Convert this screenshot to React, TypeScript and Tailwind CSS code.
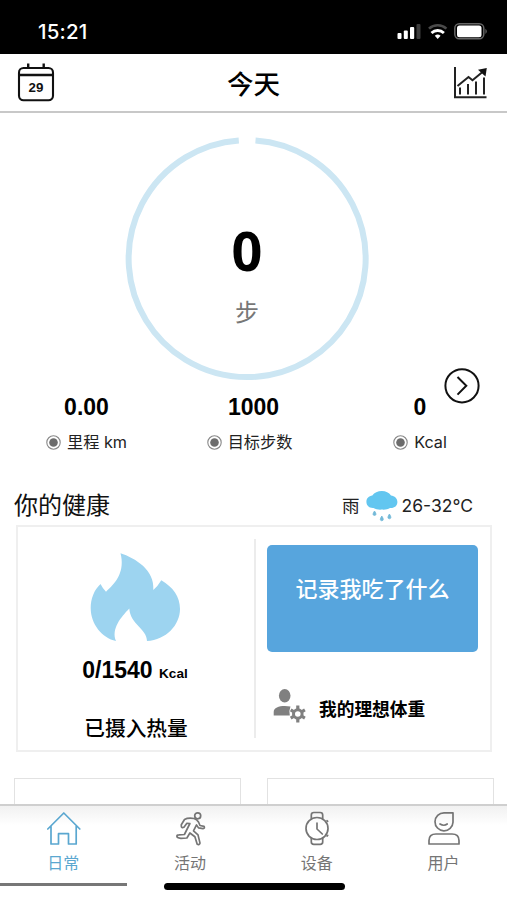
import type { ReactNode } from "react";

const UI = "font-['Inter','Noto_Sans_CJK_SC',sans-serif]";
const NUM = "font-['Liberation_Sans','Noto_Sans_CJK_SC',sans-serif]";

function StatusBar() {
  return (
    <div className="flex h-[54px] shrink-0 items-start justify-between bg-black pl-[38px] pr-[19px] text-white">
      <span className="pt-[20px] text-[20.5px] font-medium leading-[24px] tracking-[0.2px]">15:21</span>
      <svg className="mt-[22px]" width="92" height="20" viewBox="396 22 92 20">
        <g fill="#fff">
          <rect x="397.5" y="33" width="4" height="6" rx="1" />
          <rect x="403.8" y="30.5" width="4" height="8.5" rx="1" />
          <rect x="410" y="27" width="4.2" height="12" rx="1" />
          <rect x="416.5" y="24" width="4" height="15" rx="1" fill="#3c3c3c" />
          <path d="M437.7 39 l-2.9-3.2 a4.2 4.2 0 0 1 5.8 0z" />
          <rect x="457" y="25.6" width="24.5" height="11.6" rx="2.5" />
        </g>
        <path d="M429 28.6a12.8 12.8 0 0 1 17.4 0" fill="none" stroke="#4a4a4a" strokeWidth="2.6" />
        <path d="M431.5 33a9 9 0 0 1 12.4 0" fill="none" stroke="#fff" strokeWidth="2.8" />
        <rect x="454.8" y="23.8" width="29" height="15" rx="4.5" fill="none" stroke="#666" strokeWidth="1.5" />
        <path d="M485.5 28.8q2.4 2.6 0 5.2z" fill="#777" />
      </svg>
    </div>
  );
}

function Header() {
  return (
    <header className="flex h-[59px] shrink-0 items-start justify-between border-b-2 border-[#c8c8c8] pl-[17px] pr-[19px]">
      <svg className="mt-[8px]" width="38" height="42" viewBox="17 62 38 42">
        <g fill="none" stroke="#111" strokeWidth="2.1">
          <rect x="19" y="68" width="34" height="32.3" rx="4.5" />
          <path d="M19 75h34" strokeWidth="2.4" />
          <path d="M28.2 63.5V69M43.7 63.5V69" strokeWidth="2.4" />
        </g>
        <text x="36" y="92" textAnchor="middle" fontSize="13.3" fontWeight="700" fontFamily="Liberation Sans" fill="#111">29</text>
      </svg>
      <h1 className="-ml-[1px] pt-[12px] text-[26.5px] font-medium leading-[36px] text-black">今天</h1>
      <svg className="mt-[10px]" width="35" height="38" viewBox="453 64 35 38">
        <g fill="none" stroke="#222" strokeWidth="2">
          <path d="M455 67v30.3h31.5" />
          <path d="M460 87.5v7M468 84v10.5M476 81.5v13M484 77.5v17" />
          <path d="M457.5 86l11-9 4 3.3 10-8.3" />
        </g>
        <path d="M478 69.8l8.8-1.8-1.3 8.6z" fill="#111" />
      </svg>
    </header>
  );
}

function StepRing() {
  return (
    <div className="ml-[125px] mt-[24px] grid h-[244px] w-[244px] shrink-0">
      <svg className="col-start-1 row-start-1" width="244" height="244" viewBox="125 137 244 244">
        <path d="M255.5 140.4A118.5 118.5 0 1 1 238.8 140.4" fill="none" stroke="#cce6f3" strokeWidth="6" />
      </svg>
      <div className="col-start-1 row-start-1 flex flex-col items-center pt-[83px]">
        <span className="font-['Noto_Sans',sans-serif] text-[54px] font-bold leading-[60px] text-black">0</span>
        <span className="mt-[16px] text-[24px] leading-[34px] text-[#777]">步</span>
      </div>
    </div>
  );
}

function Stat({ value, label, shift }: { value: string; label: string; shift: string }) {
  return (
    <div className="flex flex-col items-center">
      <span className={`${NUM} text-[23px] font-bold leading-[26px] text-black`}>{value}</span>
      <span className={`mt-[10px] flex items-center gap-[6px] text-[16.2px] leading-[24px] text-[#222] ${shift}`}>
        <svg width="15" height="15" viewBox="0 0 15 15">
          <circle cx="7.5" cy="7.5" r="6.7" fill="#fff" stroke="#888" strokeWidth="1.1" />
          <circle cx="7.5" cy="7.5" r="4.3" fill="#6c6c6c" />
        </svg>
        {label}
      </span>
    </div>
  );
}

function Flame() {
  return (
    <svg width="92" height="92" viewBox="89 552 92 92">
      <path
        d="M120.5 553.3C135 558 155 570 153.3 590Q158 586 161.3 580.3C173 587 180 597 180 609C180 625 166 640 147 641C147 629 130 624 129.3 608.5C121 617 111 629 116 641C102 638 90.7 624 90.7 608C90.7 599 94 590 100.5 584Q103 589 106 591.7C117 582 125 571 120.5 553.3Z"
        fill="#9dd4f0"
      />
    </svg>
  );
}

function HealthCard() {
  return (
    <section className="ml-[16px] flex h-[227px] w-[476px] shrink-0 border-2 border-[#efefef]">
      <div className="my-[12px] flex w-[238px] flex-col items-center border-r-2 border-[#ececec]">
        <div className="mt-[13px] flex -translate-x-px">
          <Flame />
        </div>
        <p className={`${NUM} mt-[13px] -translate-x-px text-[23px] font-bold leading-[26px] text-black`}>
          0/1540 <span className="text-[13.6px]">Kcal</span>
        </p>
        <p className="mt-[27px] text-[20.7px] font-medium leading-[30px] text-black">已摄入热量</p>
      </div>
      <div className="flex flex-1 flex-col pl-[11px] pt-[18px]">
        <button className="flex h-[107px] w-[211px] justify-center rounded-[5px] bg-[#57a5dd] pt-[28px] text-[22px] font-medium leading-[32px] text-white">
          记录我吃了什么
        </button>
        <div className="mt-[34px] flex items-center gap-[13px] pl-[5px]">
          <svg width="34" height="38" viewBox="272 685 34 38">
            <g fill="#808080">
              <ellipse cx="284.7" cy="694.8" rx="5.8" ry="6.8" />
              <path d="M273.7 714.5V711c0-4.2 5-6 11-6q3.3 0 5.8.6-1.7 4-.7 8.9z" />
            </g>
            <circle cx="297.8" cy="713" r="4.3" fill="none" stroke="#808080" strokeWidth="3" />
            <path
              d="M297.8 704.5v4M297.8 717.5v4M290.7 708.9l3.3 1.9M301.6 715.2l3.3 1.9M290.7 717.1l3.3-1.9M301.6 710.8l3.3-1.9"
              stroke="#808080"
              strokeWidth="3.2"
            />
          </svg>
          <span className="pt-[10px] text-[17.7px] font-bold leading-[26px] text-black">我的理想体重</span>
        </div>
      </div>
    </section>
  );
}

function Tab({ label, active = false, children }: { label: string; active?: boolean; children: ReactNode }) {
  return (
    <div className={`flex w-1/4 flex-col items-center pt-[4px] ${active ? "text-[#5aa7d0]" : "text-[#757575]"}`}>
      <svg width="36" height="38" viewBox="0 0 36 38" fill="none" stroke="currentColor" strokeWidth="1.7" strokeLinejoin="round" strokeLinecap="round">
        {children}
      </svg>
      <span className="mt-[3px] text-[16px] leading-[24px]">{label}</span>
    </div>
  );
}

export default function App() {
  return (
    <div className={`${UI} flex h-[900px] w-[507px] flex-col overflow-hidden bg-white`}>
      <StatusBar />
      <Header />
      <StepRing />
      <div className="-mt-[14px] flex h-[37px] shrink-0 justify-end pr-[26px]">
        <svg width="38" height="38" viewBox="443 367 38 38" fill="none" stroke="#111" strokeWidth="2">
          <circle cx="462" cy="385.8" r="16.6" />
          <path d="M457.5 377l8.8 8.8-8.8 8.8" />
        </svg>
      </div>
      <div className="-mt-[10px] grid shrink-0 grid-cols-[167px_167px_166px] pl-[3px]">
        <Stat value="0.00" label="里程 km" shift="" />
        <Stat value="1000" label="目标步数" shift="-translate-x-1" />
        <Stat value="0" label="Kcal" shift="" />
      </div>
      <div className="mt-[32px] flex h-[40px] shrink-0 items-center pl-[14px] pr-[34px]">
        <h2 className="text-[24px] leading-[36px] text-[#111]">你的健康</h2>
        <div className="ml-auto flex items-center text-[17.5px] leading-[26px] text-[#222]">
          <span>雨</span>
          <svg className="ml-[5px] mr-[3px]" width="34" height="34" viewBox="365 488 34 34">
            <path
              d="M373.5 507C369 507.3 366.4 504.3 366.4 500.8C366.4 497.3 369 495.2 372.3 494.6C374.3 491.6 377.8 490 381.8 490C385.8 490 389 491.6 391 494.4C394.6 494.8 397.4 497.3 397.4 501C397.4 505 394.2 507.4 390 507C387.8 508.4 384.6 508.9 382 508.6C379 508.9 376 508.5 373.5 507Z"
              fill="#62c6f0"
            />
            <path d="M374.5 510q3 4.2 0 4.5-3-.3 0-4.5zM381.8 515q3 4.4 0 4.8-3-.4 0-4.8zM389.4 513q3 4.4 0 4.8-3-.4 0-4.8z" fill="#72b9d8" stroke="#72b9d8" strokeWidth="0.8" />
          </svg>
          <span>26-32°C</span>
        </div>
      </div>
      <div className="-mt-px flex shrink-0 flex-col">
        <HealthCard />
      </div>
      <div className="mt-[26px] flex h-[26px] shrink-0 gap-[26px] pl-[14px]">
        <div className="w-[227px] border border-b-0 border-[#e2e2e2]" />
        <div className="w-[227px] border border-b-0 border-[#e2e2e2]" />
      </div>
      <nav className="flex h-[79px] shrink-0 border-t-2 border-[#cfcfcf] bg-gradient-to-b from-[#f1f1f1] to-white to-25%">
        <Tab label="日常" active>
          <path d="M2.8 19L18.8 3l16 16M6 16v18h7.5V23.7h10V34h7.7V16" />
        </Tab>
        <Tab label="活动">
          <circle cx="25.7" cy="5.8" r="3" />
          <path d="M9.3 14.8L12.5 9.5Q16 7.5 22 8.5q3 1 4.5 3.5l1.5 3.5 4 .8q1.2 2-1 2.4l-4.5-.8-2-3-3 6 4.5 4 2 8.2q-.5 2-2.8 1.2l-2.3-7.5-5-3.8-3 5-6 .3q-4-.2-4-2 0-1.5 2-1.5l5.5-.3 5.5-11-3-.2-3 4q-2.5.8-2.6-1.2z" />
        </Tab>
        <Tab label="设备">
          <circle cx="18" cy="18.5" r="11" />
          <path d="M12.3 9.2V5q0-2.5 2.5-2.5h6.4q2.5 0 2.5 2.5v4.2M12.3 27.8V32q0 2.3 2.5 2.3h6.4q2.5 0 2.5-2.3v-4.2M18 13v6l5.3 5M28 10.7l.7.6M28 26l.7-.6" />
        </Tab>
        <Tab label="用户">
          <path d="M18 2.8h9v9.4a9 9 0 1 1-9-9.4zM14 14q4 2.5 7.2 0M3 34v-3.5q0-6.5 7-6.5h16q7 0 7 6.5V34z" />
        </Tab>
      </nav>
      <footer className="flex h-[17px] shrink-0 items-start">
        <div className="h-[3px] w-[127px] bg-[#777]" />
        <div className="ml-[37px] h-[7px] w-[181px] rounded-full bg-black" />
      </footer>
    </div>
  );
}
